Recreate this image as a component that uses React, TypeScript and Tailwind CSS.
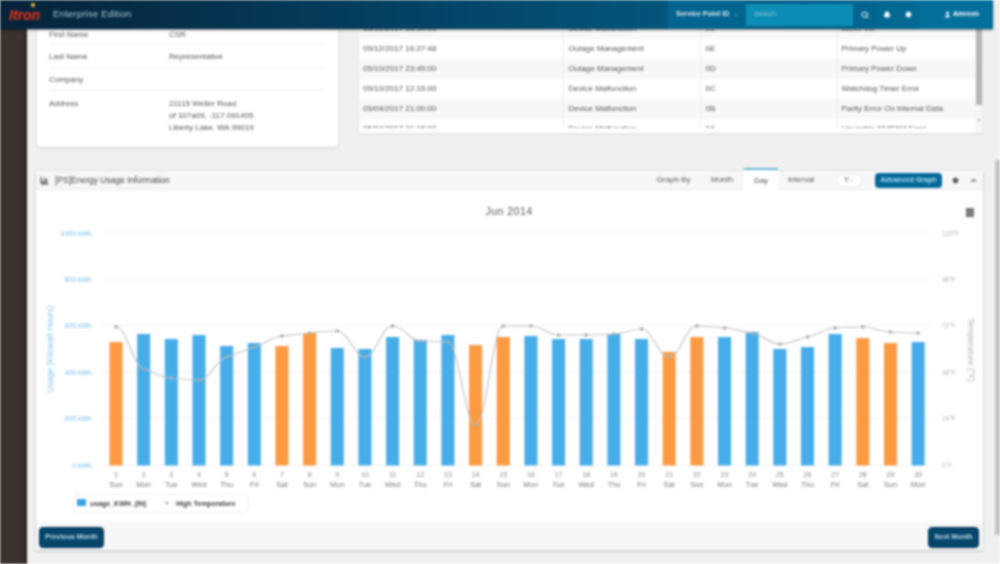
import React from "react";
import { BarChart3, Bell, ChevronDown, ChevronUp, Search, Settings, User } from "lucide-react";

// Jun 2014, usage and high temperature for every day (svg y values)
const tops = [342, 334, 339, 335, 346, 343, 346, 333, 348, 349, 337, 340, 335, 345, 337, 336, 339, 339, 334, 339, 352, 337, 337, 332, 349, 347, 334, 338, 343, 342];
const temps = [327, 369, 378, 380, 357, 347, 336, 333, 331, 357, 326, 341, 342, 425, 326, 326, 335, 335, 334, 329, 357, 326, 328, 333, 344, 337, 328, 327, 332, 333];
const dayNames = ["Sun", "Mon", "Tue", "Wed", "Thu", "Fri", "Sat"];
const isOrange = (i: number) => i % 7 === 0 || i % 7 === 6;
const barX = (i: number) => 116 + i * 27.66;

const leftAxis = ["1000 kWh", "800 kWh", "600 kWh", "400 kWh", "200 kWh", "0 kWh"];
const rightAxis = ["120°F", "96°F", "72°F", "48°F", "24°F", "0°F"];
const gridY = [233, 279, 325, 372, 418, 465];

// flat at peaks and dips so the curve does not overshoot
const slope = (i: number) => {
  if (i === 0 || i === temps.length - 1) return 0;
  const a = temps[i] - temps[i - 1];
  const b = temps[i + 1] - temps[i];
  if (a * b <= 0) return 0;
  return Math.sign(a) * Math.min(Math.abs(a), Math.abs(b));
};

const linePath = () => {
  let d = `M${barX(0)} ${temps[0]}`;
  for (let i = 1; i < temps.length; i++) {
    const c1 = temps[i - 1] + slope(i - 1) / 3;
    const c2 = temps[i] - slope(i) / 3;
    d += ` C${barX(i - 1) + 11} ${c1} ${barX(i) - 11} ${c2} ${barX(i)} ${temps[i]}`;
  }
  return d;
};

const events = [
  ["05/12/2017 16:27:48", "Outage Management", "0E", "Primary Power Up"],
  ["05/10/2017 23:45:00", "Outage Management", "0D", "Primary Power Down"],
  ["05/10/2017 12:15:00", "Device Malfunction", "0C", "Watchdog Timer Error"],
  ["05/04/2017 21:00:00", "Device Malfunction", "0B", "Parity Error On Internal Data"],
  ["05/04/2017 21:15:00", "Device Malfunction", "0A", "Unusable NVRAM Error"],
];

const Chart = () => (
  <svg viewBox="36 190 947 332" className="block w-full h-[332px]">
    <text x="509" y="215" textAnchor="middle" fontSize="10.5" letterSpacing="0.5" fill="#555">Jun 2014</text>
    <rect x="966" y="208" width="8" height="9" fill="#666" />
    <path d="M966 211h8M966 214h8M969 208v9M972 208v9" stroke="#bbb" strokeWidth="0.5" />
    {gridY.map((y, i) => (
      <g key={y}>
        <line x1="102" x2="932" y1={y} y2={y} stroke="#f1f1f1" />
        <text x="92" y={y + 2.5} textAnchor="end" fontSize="7" fill="#7cc0f0">{leftAxis[i]}</text>
        <text x="942" y={y + 2.5} fontSize="6.5" fill="#b5b5b5">{rightAxis[i]}</text>
      </g>
    ))}
    <text transform="translate(53 349) rotate(-90)" textAnchor="middle" fontSize="8.5" fill="#8ac8f2">Usage (Kilowatt Hours)</text>
    <text transform="translate(968 350) rotate(90)" textAnchor="middle" fontSize="8.5" fill="#b5b5b5">Temperature (°F)</text>
    {tops.map((top, i) => (
      <g key={i}>
        <rect x={barX(i) - 6.5} y={top} width="13" height={465.5 - top} fill={isOrange(i) ? "#fc9a42" : "#46ade9"} />
        <text x={barX(i)} y="477" textAnchor="middle" fontSize="7" fill="#888">{i + 1}</text>
        <text x={barX(i)} y="487" textAnchor="middle" fontSize="7.5" fill="#777">{dayNames[i % 7]}</text>
      </g>
    ))}
    <path d={linePath()} fill="none" stroke="#c4c4c4" strokeWidth="1.2" />
    {temps.map((y, i) => (
      <circle key={i} cx={barX(i)} cy={y} r="1.8" fill="#aaa" />
    ))}
    <rect x="74" y="494" width="174" height="18" rx="4" fill="#fff" stroke="#f0f0f0" />
    <rect x="77" y="499" width="9" height="7" rx="1" fill="#3aa3e6" />
    <text x="90" y="506" fontSize="7" fontWeight="bold" fill="#444">usage_KWH_(IN)</text>
    <circle cx="167" cy="503" r="1.5" fill="#aaa" />
    <text x="176" y="506" fontSize="7" fontWeight="bold" fill="#444">High Temperature</text>
  </svg>
);

const App = () => {
  return (
    <div className="font-['Liberation_Sans',Arial,sans-serif] w-[1000px] h-[564px] overflow-hidden flex flex-col bg-[#f0f0f0] text-[8px] text-[#555] blur-[0.8px]">
      <header className="w-[993px] h-[29px] shrink-0 flex items-center justify-between bg-gradient-to-r from-[#05233a] via-[#03496c] to-[#03709c] shadow-[0_1px_2px_rgba(0,0,0,0.5)] z-10">
        <div className="flex items-center">
          <span className="relative ml-[9px] w-[36px] text-[14px] leading-none font-bold italic text-[#f0300f]">
            Itron
            <span className="absolute left-[22px] -top-[5px] w-1 h-1 rounded-full bg-[#f2b632]" />
          </span>
          <span className="ml-[8px] text-[9.5px] tracking-[0.2px] text-[#a9cbd8]">Enterprise Edition</span>
        </div>
        <div className="flex items-center h-full text-[7px]">
          <div className="h-full w-[78px] flex items-center gap-1 bg-[#03648f] pl-[8px] font-bold text-[#d8ecf4]">
            Service Point ID <ChevronDown size={6} />
          </div>
          <div className="w-[107px] h-[22px] flex items-center px-2 bg-[#0b8db6] text-[#8cc8dc]">Search</div>
          <div className="h-full w-[67px] flex items-center gap-[14px] pl-[8px] text-white">
            <Search size={8} strokeWidth={3} />
            <Bell size={8} fill="white" />
            <Settings size={7} fill="white" />
          </div>
          <div className="h-full w-[73px] flex items-center gap-[2px] pl-[24px] bg-[#03709c] font-bold text-white">
            <User size={7} fill="white" /> Amreen
          </div>
        </div>
      </header>

      <div className="flex-1 min-h-0 flex">
        <aside className="w-[27px] shrink-0 bg-[#3b312d] border-r-2 border-[#221c1a]" />

        <main className="relative flex-1 min-w-0 overflow-hidden pl-[10px] pr-[18px]">
          <div className="h-[121px] flex gap-[21px] items-start">
            <section className="w-[301px] h-[118px] shrink-0 bg-white shadow-[0_1px_3px_rgba(0,0,0,0.12)] rounded-b-sm px-3">
              <div className="h-[16px] pb-[4px] flex items-center border-b border-[#f1f1f1]">
                <span className="w-[120px]">First Name</span>
                <span>CSR</span>
              </div>
              <div className="h-[23px] pt-[2px] flex items-center border-b border-[#f1f1f1]">
                <span className="w-[120px]">Last Name</span>
                <span>Representative</span>
              </div>
              <div className="h-[23px] pt-[2px] flex items-center border-b border-[#f1f1f1]">
                <span className="w-[120px]">Company</span>
              </div>
              <div className="flex pt-[7px] leading-[12px]">
                <span className="w-[120px]">Address</span>
                <div>
                  <div>21115 Weller Road</div>
                  <div>of 107a09, -117.091405</div>
                  <div>Liberty Lake, WA 99019</div>
                </div>
              </div>
            </section>

            <section className="relative flex-1 h-[104px] bg-white shadow-[0_1px_2px_rgba(0,0,0,0.08)]">
              <div className="h-[99px] overflow-hidden">
                <table className="w-[616px] table-fixed -mt-[10px]">
                  <tbody>
                    <tr className="h-[20px] bg-[#f7f7f7]">
                      <td className="w-[204px] pl-[4px]">05/12/2017 18:30:00</td>
                      <td className="w-[137px] pl-[5px] border-l border-[#eeeeee]">Device Malfunction</td>
                      <td className="w-[137px] pl-[5px] border-l border-[#eeeeee]">01</td>
                      <td className="pl-[4px] border-l border-[#eeeeee]">Meter Init</td>
                    </tr>
                    {events.map((row, i) => (
                      <tr key={row[0]} className={`h-[20px] ${i % 2 === 1 ? "bg-[#f7f7f7]" : "bg-white"}`}>
                        <td className="pl-[4px]">{row[0]}</td>
                        <td className="pl-[5px] border-l border-[#eeeeee]">{row[1]}</td>
                        <td className="pl-[5px] border-l border-[#eeeeee]">{row[2]}</td>
                        <td className="pl-[4px] border-l border-[#eeeeee]">{row[3]}</td>
                      </tr>
                    ))}
                  </tbody>
                </table>
              </div>
              <div className="absolute right-0 top-0 w-[7px] h-full flex flex-col items-center bg-[#f7f7f7]">
                <div className="w-[6px] h-[76px] bg-[#b5b5b5]" />
                <ChevronDown size={6} strokeWidth={3} className="mt-[12px] text-[#777]" />
              </div>
            </section>
          </div>

          <section className="mt-[21px] -ml-px w-[947px] h-[379px] flex flex-col bg-white shadow-[0_1px_3px_rgba(0,0,0,0.2)]">
            <div className="h-[19px] shrink-0 flex items-center bg-[#f7f7f7] border-b border-[#e8e8e8]">
              <BarChart3 size={9} strokeWidth={3} className="ml-[4px] text-[#444]" />
              <span className="ml-[6px] flex-1 text-[8.5px] text-[#444]">[PS]Energy Usage Information</span>
              <div className="flex items-center h-full">
                <span className="w-[37px] mr-[19px] text-center">Graph By</span>
                <span className="w-[22px] mr-[11px] text-center">Month</span>
                <span className="h-[25px] w-[34px] mr-[9px] flex items-center justify-center bg-white border-t-2 border-[#66b5d6]">Day</span>
                <span className="w-[28px] mr-[21px] text-center">Interval</span>
                <span className="h-[13px] w-[26px] mr-[13px] flex items-center justify-center rounded-full bg-white border border-[#eeeeee]">
                  Y <ChevronDown size={5} />
                </span>
                <span className="h-[15px] w-[67px] mr-[10px] flex items-center justify-center rounded-sm bg-[#03699a] font-bold text-[7px] text-[#b8dcec]">Advanced Graph</span>
                <Settings size={7} className="mr-[11px] text-[#555]" fill="#555" />
                <ChevronUp size={7} strokeWidth={4} className="mr-[6px] text-[#444]" />
              </div>
            </div>
            <Chart />
            <div className="flex-1 flex items-center justify-between pl-[3px] pr-[4px] pt-[2px] bg-[#f7f7f7] text-[7px]">
              <button className="h-[21px] w-[65px] rounded-sm bg-[#05466b] font-bold text-[#bcd8e4] border border-[#04365a]">Previous Month</button>
              <button className="h-[21px] w-[51px] rounded-sm bg-[#05466b] font-bold text-[#bcd8e4] border border-[#04365a]">Next Month</button>
            </div>
          </section>

          <div className="absolute right-0 top-[131px] w-[5px] h-[375px] bg-[#c4c4c4]" />
        </main>
      </div>
    </div>
  );
};

export default App;
